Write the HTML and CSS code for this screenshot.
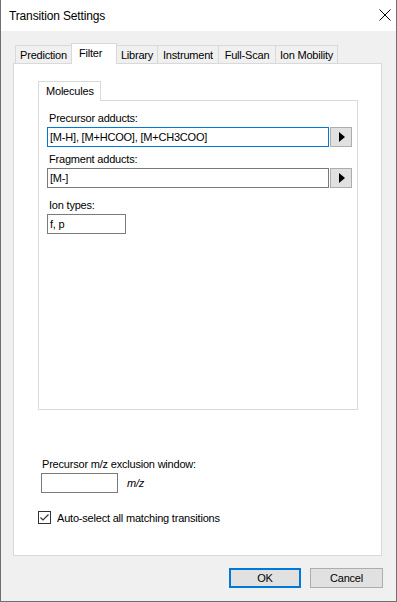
FILE: index.html
```html
<!DOCTYPE html>
<html lang="en">
  <head>
    <meta charset="UTF-8" />
    <meta name="viewport" content="width=device-width, initial-scale=1.0" />
    <title>Transition Settings</title>
    <link rel="stylesheet" href="styles.css">
  </head>
  <body>
    <div class="window">
      <div class="titlebar">
        <span class="title">Transition Settings</span>
        <svg class="close" width="12" height="12" viewBox="0 0 12 12">
          <path d="M0.5 0.5 L11.5 11.5 M11.5 0.5 L0.5 11.5" stroke="#000" stroke-width="1" fill="none" />
        </svg>
      </div>

      <div class="content">
        <div class="tabs">
          <div class="tab tab-prediction">Prediction</div>
          <div class="tab tab-filter active">Filter</div>
          <div class="tab tab-library">Library</div>
          <div class="tab tab-instrument">Instrument</div>
          <div class="tab tab-fullscan">Full-Scan</div>
          <div class="tab tab-ionmobility">Ion Mobility</div>
        </div>

        <div class="tab-panel">
          <div class="group-tabs">
            <div class="group-tab">Molecules</div>
          </div>
          <div class="group-panel">
            <label class="field-label">Precursor adducts:</label>
            <div class="field-row">
              <input type="text" class="textbox wide focused" value="[M-H], [M+HCOO], [M+CH3COO]" />
              <button class="arrow-btn">
                <svg width="6" height="10" viewBox="0 0 6 10"><path d="M0 0 L6 5 L0 10 Z" fill="#000" /></svg>
              </button>
            </div>

            <label class="field-label second">Fragment adducts:</label>
            <div class="field-row">
              <input type="text" class="textbox wide" value="[M-]" />
              <button class="arrow-btn">
                <svg width="6" height="10" viewBox="0 0 6 10"><path d="M0 0 L6 5 L0 10 Z" fill="#000" /></svg>
              </button>
            </div>

            <label class="field-label third">Ion types:</label>
            <div class="field-row">
              <input type="text" class="textbox short" value="f, p" />
            </div>
          </div>

          <div class="exclusion">
            <label class="field-label">Precursor m/z exclusion window:</label>
            <div class="field-row">
              <input type="text" class="textbox excl" value="" />
              <span class="unit">m/z</span>
            </div>
          </div>

          <div class="check-row">
            <span class="checkbox">
              <svg width="11" height="11" viewBox="0 0 11 11">
                <path d="M1.5 5.5 L4 8 L9.5 2.5" stroke="#333" stroke-width="1.2" fill="none" />
              </svg>
            </span>
            <span>Auto-select all matching transitions</span>
          </div>
        </div>

        <div class="footer">
          <button class="btn default">OK</button>
          <button class="btn">Cancel</button>
        </div>
      </div>
    </div>
  </body>
</html>
```

FILE: styles.css
```css
* {
  box-sizing: border-box;
}
body {
  margin: 0;
  font-family: "Liberation Sans", Arial, sans-serif;
  font-size: 11px;
  letter-spacing: -0.2px;
  color: #000;
  background: #fff;
}
.window {
  width: 397px;
  height: 602px;
  border: 1px solid #707070;
  border-top: none;
  display: flex;
  flex-direction: column;
}
.titlebar {
  height: 31px;
  background: #fff;
  display: flex;
  align-items: center;
  justify-content: space-between;
  padding: 1px 9px 0 8px;
}
.title {
  font-size: 12px;
  letter-spacing: -0.15px;
}
.close {
  margin-right: -4px;
  margin-top: -2px;
}
.content {
  flex: 1;
  background: #f0f0f0;
  padding: 12px 0 0 12px;
}

/* tab strip */
.tabs {
  display: flex;
  align-items: flex-end;
  height: 20px;
  padding-left: 2px;
}
.tab {
  height: 18px;
  line-height: 19px;
  text-align: center;
  background: #f0f0f0;
  border-top: 1px solid #d9d9d9;
  border-right: 1px solid #d9d9d9;
}
.tab-prediction {
  width: 57px;
  border-left: 1px solid #d9d9d9;
}
.tab-filter { width: 46px; }
.tab-library { width: 41px; }
.tab-instrument { width: 61px; }
.tab-fullscan { width: 57px; }
.tab-ionmobility { width: 62px; }
.tab.active {
  height: 21px;
  line-height: 18px;
  text-align: left;
  padding-left: 7px;
  background: #fff;
  border-left: 1px solid #d9d9d9;
  margin-left: -1px;
  margin-bottom: -1px;
  position: relative;
  z-index: 1;
}
.tab-panel {
  width: 369px;
  height: 493px;
  background: #fff;
  border: 1px solid #d9d9d9;
  padding: 17px 0 0 24px;
}

/* inner group */
.group-tabs {
  display: flex;
}
.group-tab {
  width: 63px;
  height: 20px;
  line-height: 19px;
  padding-left: 7px;
  background: #fff;
  border: 1px solid #d9d9d9;
  border-bottom: none;
  margin-bottom: -1px;
  position: relative;
  z-index: 1;
}
.group-panel {
  width: 320px;
  height: 310px;
  border: 1px solid #d9d9d9;
  padding: 10px 8px;
}
.field-label {
  display: block;
  height: 15px;
  line-height: 15px;
  padding-left: 2px;
  margin-bottom: 1px;
}
.field-label.second {
  margin-top: 5px;
}
.field-label.third {
  margin-top: 10px;
}
.field-row {
  display: flex;
  align-items: center;
}
.textbox {
  height: 20px;
  border: 1px solid #7a7a7a;
  padding: 0 2px;
  font-family: "Liberation Sans", Arial, sans-serif;
  font-size: 11px;
  letter-spacing: -0.2px;
  color: #000;
  background: #fff;
  outline: none;
}
.textbox.focused {
  border-color: #0078d7;
}
.textbox.wide {
  width: 282px;
  flex: none;
}
.textbox.short {
  width: 79px;
}
.textbox.excl {
  width: 77px;
}
.arrow-btn {
  width: 22px;
  height: 20px;
  flex: none;
  margin-left: 1px;
  padding: 0 0 0 2px;
  background: #e1e1e1;
  border: 1px solid #adadad;
  display: flex;
  align-items: center;
  justify-content: center;
}

/* exclusion window */
.exclusion {
  margin-top: 47px;
  margin-left: 3px;
}
.exclusion .field-label {
  padding-left: 1px;
}
.unit {
  font-style: italic;
  margin-left: 9px;
}
.check-row {
  display: flex;
  align-items: center;
  margin-top: 18px;
}
.checkbox {
  width: 13px;
  height: 13px;
  border: 1px solid #333;
  background: #fff;
  display: flex;
  align-items: center;
  justify-content: center;
  margin-right: 6px;
}

/* buttons */
.footer {
  display: flex;
  justify-content: flex-end;
  gap: 9px;
  margin-top: 12px;
  padding-right: 13px;
}
.btn {
  width: 73px;
  height: 20px;
  background: #e1e1e1;
  border: 1px solid #adadad;
  font-family: "Liberation Sans", Arial, sans-serif;
  font-size: 11px;
  letter-spacing: -0.2px;
  color: #000;
  padding: 0;
}
.btn.default {
  width: 72px;
  border: 2px solid #0078d7;
}
```
